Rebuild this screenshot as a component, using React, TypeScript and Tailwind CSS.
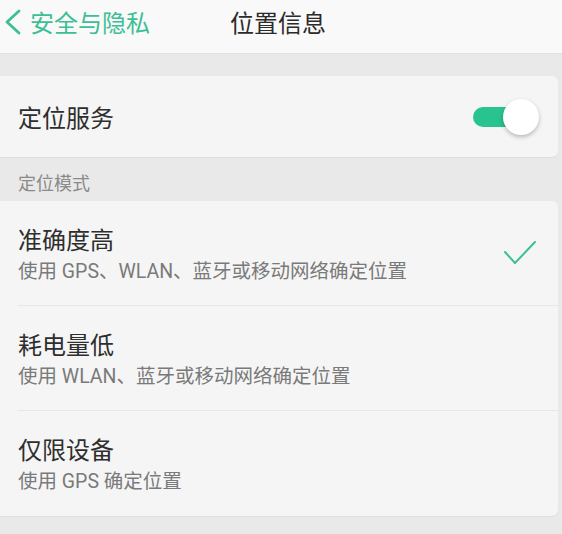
import { ReactNode } from 'react'

const cjk = { fontFamily: '"Noto Sans CJK SC", "Noto Sans", sans-serif' }
const mixed = { fontFamily: 'Roboto, "Noto Sans CJK SC", sans-serif' }

function Check() {
  return (
    <svg width="34" height="26" viewBox="0 0 34 26" fill="none" aria-hidden="true">
      <path d="M2 12 L12 23 L32 2" stroke="#3cbf95" strokeWidth="2" strokeLinecap="round" strokeLinejoin="round" />
    </svg>
  )
}

function ModeRow({ title, sub, right, last }: { title: string; sub: string; right?: ReactNode; last?: boolean }) {
  return (
    <div className="pl-[18px]">
      <div
        className={`flex h-[105px] items-center justify-between pr-[21px] ${last ? '' : 'border-b border-[#e6e6e6]'}`}
      >
        <div className="flex flex-col">
          <span className="text-[24px] leading-[32px] text-[#2e2e2e]">{title}</span>
          <span className="mt-[5px] text-[19.5px] leading-[24px] text-[#7a7a7a]" style={mixed}>
            {sub}
          </span>
        </div>
        {right}
      </div>
    </div>
  )
}

export default function App() {
  return (
    <div className="h-[534px] w-[562px] overflow-hidden bg-[#e9e9e9]" style={cjk}>
      {/* 顶栏 */}
      <div className="flex h-[54px] items-center border-b border-[#e0e0e0] bg-[#f9f9f9] pb-[14px] pt-[4px]">
        <div className="flex w-[230px] items-center pl-[4px] text-[#3cbf95]">
          <svg width="18" height="26" viewBox="0 0 18 26" fill="none" aria-hidden="true">
            <path d="M15 2 L3 13 L15 24" stroke="#3cbf95" strokeWidth="2.8" strokeLinecap="round" strokeLinejoin="round" />
          </svg>
          <span className="ml-[8px] text-[24px] leading-none">安全与隐私</span>
        </div>
        <span className="text-[24px] leading-none text-[#2b2b2b]">位置信息</span>
      </div>

      {/* 定位服务 */}
      <div className="mt-[22px] flex h-[81px] w-[558px] items-center justify-between rounded-r-md bg-[#f5f5f5] pl-[18px] pr-[19px] shadow-[0_1px_1px_rgba(0,0,0,0.05)]">
        <span className="text-[24px] text-[#2e2e2e]">定位服务</span>
        <div className="relative h-[36px] w-[66px]">
          <div className="absolute left-0 top-[8px] h-[20px] w-[46px] rounded-full bg-[#28c38e]" />
          <div className="absolute right-0 top-0 h-[36px] w-[36px] rounded-full bg-white shadow-[0_2px_4px_rgba(0,0,0,0.25)]" />
        </div>
      </div>

      <div className="flex h-[44px] items-center pl-[18px] pt-[6px] text-[18px] text-[#8a8a8a]">定位模式</div>

      {/* 定位模式 */}
      <div className="w-[558px] rounded-r-md bg-[#f5f5f5] shadow-[0_1px_1px_rgba(0,0,0,0.05)]">
        <ModeRow title="准确度高" sub="使用 GPS、WLAN、蓝牙或移动网络确定位置" right={<Check />} />
        <ModeRow title="耗电量低" sub="使用 WLAN、蓝牙或移动网络确定位置" />
        <ModeRow title="仅限设备" sub="使用 GPS 确定位置" last />
      </div>
    </div>
  )
}
